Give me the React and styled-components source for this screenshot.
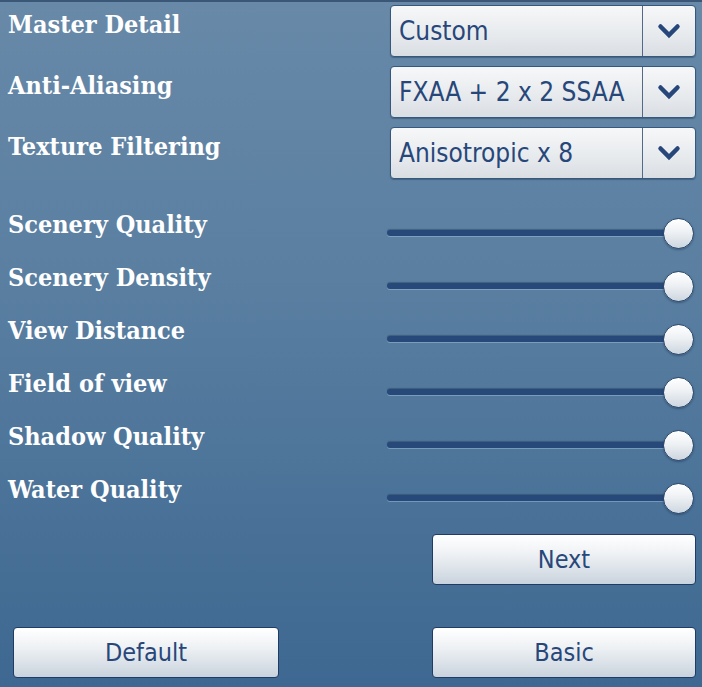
import React from "react";
import styled, { createGlobalStyle } from "styled-components";

const Global = createGlobalStyle`
  html, body { margin: 0; padding: 0; }
  body { background: #3b6590; }
  * { box-sizing: border-box; }
`;

const Page = styled.div`
  width: 702px;
  height: 687px;
  overflow: hidden;
  background: linear-gradient(180deg, #6889a8 0%, #5a7fa1 40%, #3e6891 100%);
  border-top: 2px solid #3b5777;
  padding: 3px 6px 0 8px;
  display: flex;
  flex-direction: column;
`;

const Section = styled.div`
  display: flex;
  flex-direction: column;
  gap: ${(p) => p.$gap || 0}px;
  margin-top: ${(p) => p.$top || 0}px;
`;

const Row = styled.div`
  display: grid;
  grid-template-columns: 1fr 309px;
  height: ${(p) => p.$h}px;
  align-items: center;
`;

const Label = styled.div`
  align-self: start;
  padding-top: ${(p) => p.$pt || 4}px;
  font-family: "DejaVu Serif Condensed", "DejaVu Serif", serif;
  font-weight: 700;
  font-size: 25px;
  line-height: 30px;
  color: #ffffff;
  white-space: nowrap;
`;

const Select = styled.div`
  margin-left: 3px;
  height: 52px;
  display: flex;
  border: 1px solid #34587e;
  border-radius: 4px;
  background: linear-gradient(180deg, #f6f7f8 0%, #e8ebee 55%, #d9dee3 100%);
  box-shadow: 0 1px 1px rgba(20, 40, 70, 0.35);
  overflow: hidden;
`;

const SelectValue = styled.div`
  flex: 1;
  display: flex;
  align-items: center;
  padding-left: 8px;
  font-family: "DejaVu Sans Condensed", "DejaVu Sans", sans-serif;
  font-size: 26px;
  color: #27477a;
  border-right: 1px solid #52698a;
  white-space: nowrap;
`;

const Arrow = styled.div`
  width: 52px;
  display: flex;
  align-items: center;
  justify-content: center;
`;

const Slider = styled.div`
  position: relative;
  height: 32px;
  display: flex;
  align-items: center;
`;

const Track = styled.div`
  height: 6px;
  width: 290px;
  border-radius: 3px;
  background: #27497a;
  box-shadow: 0 1px 0 rgba(170, 200, 225, 0.45), 0 -1px 1px rgba(20, 40, 70, 0.35);
`;

const Thumb = styled.div`
  position: absolute;
  right: 2px;
  top: 1px;
  width: 31px;
  height: 31px;
  border-radius: 50%;
  border: 1.5px solid #2e4b6e;
  background: linear-gradient(180deg, #ffffff 0%, #eef1f4 45%, #cdd6df 100%);
  box-shadow: 0 1px 2px rgba(20, 40, 70, 0.4);
`;

const ButtonRow = styled.div`
  display: flex;
  justify-content: ${(p) => (p.$split ? "space-between" : "flex-end")};
  padding-left: 5px;
  margin-top: ${(p) => p.$top}px;
`;

const Button = styled.button`
  width: ${(p) => p.$w || 264}px;
  height: 51px;
  border: 1.5px solid #1f3c66;
  border-radius: 4px;
  background: linear-gradient(180deg, #ffffff 0%, #eef1f4 40%, #c9d3dd 100%);
  font-family: "DejaVu Sans Condensed", "DejaVu Sans", sans-serif;
  font-size: 25px;
  color: #27477a;
  padding: 0;
  cursor: pointer;
`;

const Chevron = () => (
  <svg width="24" height="16" viewBox="0 0 24 16">
    <polyline
      points="3.5,3.5 12,12 20.5,3.5"
      fill="none"
      stroke="#27477a"
      strokeWidth="4.5"
      strokeLinecap="round"
      strokeLinejoin="miter"
    />
  </svg>
);

const selects = [
  ["Master Detail", "Custom"],
  ["Anti-Aliasing", "FXAA + 2 x 2 SSAA"],
  ["Texture Filtering", "Anisotropic x 8"],
];

const sliders = [
  "Scenery Quality",
  "Scenery Density",
  "View Distance",
  "Field of view",
  "Shadow Quality",
  "Water Quality",
];

export default function App() {
  return (
    <>
      <Global />
      <Page>
        <Section $gap={9}>
          {selects.map(([label, value]) => (
            <Row key={label} $h={52}>
              <Label $pt={5}>{label}</Label>
              <Select>
                <SelectValue>{value}</SelectValue>
                <Arrow>
                  <Chevron />
                </Arrow>
              </Select>
            </Row>
          ))}
        </Section>
        <Section $top={27}>
          {sliders.map((label) => (
            <Row key={label} $h={53}>
              <Label $pt={4}>{label}</Label>
              <Slider>
                <Track />
                <Thumb />
              </Slider>
            </Row>
          ))}
        </Section>
        <ButtonRow $top={10}>
          <Button>Next</Button>
        </ButtonRow>
        <ButtonRow $top={42} $split>
          <Button $w={266}>Default</Button>
          <Button>Basic</Button>
        </ButtonRow>
      </Page>
    </>
  );
}
